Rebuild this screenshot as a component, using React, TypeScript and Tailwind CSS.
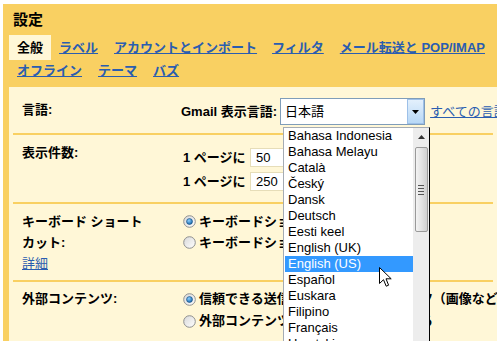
import React from 'react';

const LANGS = [
  'Bahasa Indonesia',
  'Bahasa Melayu',
  'Català',
  'Český',
  'Dansk',
  'Deutsch',
  'Eesti keel',
  'English (UK)',
  'English (US)',
  'Español',
  'Euskara',
  'Filipino',
  'Français',
  'Hrvatski',
];

const Radio: React.FC<{ checked?: boolean }> = ({ checked }) => (
  <svg width="13" height="13" viewBox="0 0 13 13" className="shrink-0">
    <defs>
      <linearGradient id={checked ? 'rbg1' : 'rbg0'} x1="0" y1="0" x2="1" y2="1">
        <stop offset="0" stopColor="#d8d8d8" />
        <stop offset="1" stopColor="#ffffff" />
      </linearGradient>
      <radialGradient id="rdot" cx="0.4" cy="0.35" r="0.7">
        <stop offset="0" stopColor="#8fd0ff" />
        <stop offset="1" stopColor="#0b5fa5" />
      </radialGradient>
    </defs>
    <circle cx="6.5" cy="6.5" r="5.8" fill={`url(#${checked ? 'rbg1' : 'rbg0'})`} stroke="#8e8f8f" strokeWidth="1" />
    {checked && <circle cx="6.5" cy="6.5" r="3" fill="url(#rdot)" stroke="#0d3f6e" strokeWidth="0.5" />}
  </svg>
);

const Row: React.FC<{ children: React.ReactNode; className?: string }> = ({ children, className }) => (
  <div className={`mx-[4px] pl-[9px] border-b-2 border-[#F9D062] flex ${className ?? ''}`}>{children}</div>
);

const App: React.FC = () => (
  <div className="relative w-[497px] h-[341px] overflow-hidden bg-white pt-[4px] pl-[3px] text-[13px] text-black font-['Liberation_Sans','Noto_Sans_CJK_JP',sans-serif]">
    <div className="h-full bg-[#F9D062] pl-[6px] pt-[6px] flex flex-col">
      {/* Title */}
      <h1 className="pl-[4px] text-[15px] leading-[20px] font-bold">設定</h1>

      {/* Tabs */}
      <div className="mt-[5px] h-[25px] flex items-center font-bold whitespace-nowrap">
        <span className="h-full px-[8px] flex items-center bg-[#FFF7D7]">全般</span>
        <a className="ml-[8px] text-[#2A5DB0] underline">ラベル</a>
        <a className="ml-[16px] text-[#2A5DB0] underline">アカウントとインポート</a>
        <a className="ml-[15px] text-[#2A5DB0] underline">フィルタ</a>
        <a className="ml-[16px] text-[#2A5DB0] underline">メール転送と POP/IMAP</a>
      </div>
      <div className="h-[22px] pl-[8px] flex items-center gap-[16px] font-bold whitespace-nowrap">
        <a className="text-[#2A5DB0] underline">オフライン</a>
        <a className="text-[#2A5DB0] underline">テーマ</a>
        <a className="text-[#2A5DB0] underline">バズ</a>
      </div>

      {/* Panel */}
      <div className="mt-[5px] flex-1 bg-[#FFF7D7] font-bold whitespace-nowrap">
        <Row className="h-[48px]">
          <div className="w-[159px] shrink-0 pt-[15px] leading-[16px]">言語:</div>
          <div className="shrink-0 pt-[11px] flex items-start">
            <span className="h-[27px] flex items-center">Gmail 表示言語:</span>
            <div className="ml-[3px] w-[145px] h-[27px] bg-white border border-[#7F9DB9] flex font-normal">
              <span className="flex-1 pl-[4px] flex items-center">日本語</span>
              <span className="w-[17px] h-full border border-[#9DC0E8] bg-gradient-to-b from-[#E3F0FC] to-[#B8D8F6] flex items-center justify-center">
                <svg width="7" height="4" viewBox="0 0 7 4"><path d="M0 0h7L3.5 4z" fill="#000" /></svg>
              </span>
            </div>
            <a className="ml-[5px] h-[27px] flex items-center font-normal text-[#2A5DB0] underline">すべての言語で表示</a>
          </div>
        </Row>

        <Row className="h-[69px]">
          <div className="w-[159px] shrink-0 pt-[10px] leading-[16px]">表示件数:</div>
          <div className="shrink-0 pt-[13px] pl-[2px] flex flex-col gap-[5px]">
            <div className="flex items-center h-[19px]">
              <span className="w-[67px]">1 ページに</span>
              <span className="w-[42px] h-[19px] bg-white border border-[#E6DDB8] pl-[5px] font-normal leading-[17px]">50</span>
            </div>
            <div className="flex items-center h-[19px]">
              <span className="w-[67px]">1 ページに</span>
              <span className="w-[42px] h-[19px] bg-white border border-[#E6DDB8] pl-[5px] font-normal leading-[17px]">250</span>
            </div>
          </div>
        </Row>

        <Row className="h-[78px]">
          <div className="w-[159px] shrink-0 pt-[7px] leading-[21px]">
            キーボード ショート
            <br />
            カット:
            <br />
            <a className="font-normal text-[#2A5DB0] underline">詳細</a>
          </div>
          <div className="shrink-0 pt-[7px] pl-[2px] flex flex-col leading-[21px]">
            <label className="flex items-center gap-[3px]">
              <Radio checked />
              キーボードショートカット ON
            </label>
            <label className="flex items-center gap-[3px]">
              <Radio />
              キーボードショートカット OFF
            </label>
          </div>
        </Row>

        <div className="mx-[4px] pl-[9px] flex">
          <div className="w-[159px] shrink-0 pt-[6px] leading-[22px]">外部コンテンツ:</div>
          <div className="shrink-0 pt-[6px] pl-[2px] flex flex-col leading-[22px]">
            <label className="flex items-center gap-[3px]">
              <Radio checked />
              信頼できる送信者からの外部コンテンツ（画像など）を常に表示する
            </label>
            <label className="flex items-center gap-[3px]">
              <Radio />
              外部コンテンツを表示する前に確認する
            </label>
          </div>
        </div>
      </div>
    </div>

    {/* Open select list */}
    <div className="absolute left-[283px] top-[127px] w-[147px] h-[220px] bg-white border-t border-l border-[#A5ACB5] border-r border-r-black flex">
      <div className="w-[129px] pl-[1px] flex flex-col">
        {LANGS.map((l) => (
          <div
            key={l}
            className={`h-[16px] leading-[16px] pl-[3px] ${l === 'English (US)' ? 'bg-[#3399FF] text-white' : ''}`}
          >
            {l}
          </div>
        ))}
      </div>
      <div className="w-[16px] bg-[#EDEDED] flex flex-col items-center">
        <div className="h-[18px] w-full flex items-center justify-center">
          <svg width="7" height="4" viewBox="0 0 7 4"><path d="M3.5 0L7 4H0z" fill="#333" /></svg>
        </div>
        <div className="mt-[1px] w-[13px] h-[85px] rounded-[2px] border border-[#9a9a9a] bg-gradient-to-r from-[#F4F4F4] via-[#E2E2E2] to-[#CFCFCF] flex flex-col items-center justify-center gap-[2px]">
          <span className="w-[6px] h-[1px] bg-[#555]" />
          <span className="w-[6px] h-[1px] bg-[#555]" />
          <span className="w-[6px] h-[1px] bg-[#555]" />
          <span className="w-[6px] h-[1px] bg-[#555]" />
        </div>
      </div>
    </div>

    {/* Mouse cursor */}
    <svg className="absolute left-[379px] top-[267px]" width="13" height="21" viewBox="0 0 13 21">
      <path d="M0.5 0.5V16.5L4.5 12.7L7.2 19.2L9.6 18.2L7 11.8H12.2Z" fill="#fff" stroke="#000" strokeWidth="1" strokeLinejoin="miter" />
    </svg>
  </div>
);

export default App;
